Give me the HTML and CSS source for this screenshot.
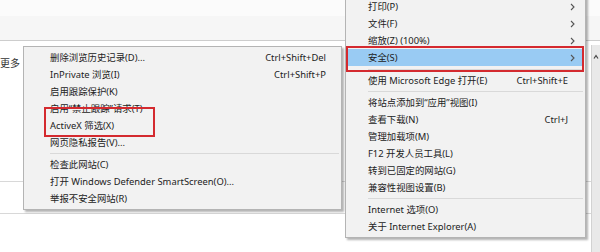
FILE: index.html
```html
<!DOCTYPE html>
<html>
<head>
<meta charset="utf-8">
<link rel="stylesheet" href="styles.css">
</head>
<body>
<div class="page">
  <div class="topbar"></div>
  <div class="toolbar"></div>
  <div class="content">
    <div class="main">
      <div class="more">更多</div>
      <div class="row row-a"></div>
      <div class="row row-b"></div>
    </div>
    <div class="scrollbar"><svg class="sb-arrow" width="6" height="6" viewBox="0 0 6 6"><path d="M1 4.5 L3 1.5 L5 4.5" fill="none" stroke="#444" stroke-width="1.2"/></svg></div>
  </div>

  <div class="menu menu-left">
    <div class="item"><span>删除浏览历史记录(D)...</span><span class="key">Ctrl+Shift+Del</span></div>
    <div class="item"><span>InPrivate 浏览(I)</span><span class="key">Ctrl+Shift+P</span></div>
    <div class="item"><span>启用跟踪保护(K)</span></div>
    <div class="item"><span>启用“禁止跟踪”请求(T)</span></div>
    <div class="item"><span>ActiveX 筛选(X)</span></div>
    <div class="item"><span>网页隐私报告(V)...</span></div>
    <div class="sep"></div>
    <div class="item"><span>检查此网站(C)</span></div>
    <div class="item"><span>打开 Windows Defender SmartScreen(O)...</span></div>
    <div class="item"><span>举报不安全网站(R)</span></div>
    <div class="mark mark-activex"></div>
  </div>

  <div class="menu menu-right">
    <div class="item"><span>打印(P)</span><svg class="arrow" width="5" height="8" viewBox="0 0 5 8"><path d="M1 1 L4 4 L1 7" fill="none" stroke="#555" stroke-width="1.1"/></svg></div>
    <div class="item"><span>文件(F)</span><svg class="arrow" width="5" height="8" viewBox="0 0 5 8"><path d="M1 1 L4 4 L1 7" fill="none" stroke="#555" stroke-width="1.1"/></svg></div>
    <div class="item"><span>缩放(Z) (100%)</span><svg class="arrow" width="5" height="8" viewBox="0 0 5 8"><path d="M1 1 L4 4 L1 7" fill="none" stroke="#555" stroke-width="1.1"/></svg></div>
    <div class="item active"><span>安全(S)</span><svg class="arrow" width="5" height="8" viewBox="0 0 5 8"><path d="M1 1 L4 4 L1 7" fill="none" stroke="#555" stroke-width="1.1"/></svg></div>
    <div class="sep sep-wide"></div>
    <div class="item"><span>使用 Microsoft Edge 打开(E)</span><span class="key">Ctrl+Shift+E</span></div>
    <div class="sep"></div>
    <div class="item"><span>将站点添加到“应用”视图(I)</span></div>
    <div class="item"><span>查看下载(N)</span><span class="key">Ctrl+J</span></div>
    <div class="item"><span>管理加载项(M)</span></div>
    <div class="item"><span>F12 开发人员工具(L)</span></div>
    <div class="item"><span>转到已固定的网站(G)</span></div>
    <div class="item"><span>兼容性视图设置(B)</span></div>
    <div class="sep"></div>
    <div class="item"><span>Internet 选项(O)</span></div>
    <div class="item"><span>关于 Internet Explorer(A)</span></div>
    <div class="mark mark-security"></div>
  </div>
</div>
</body>
</html>
```

FILE: styles.css
```css
* { box-sizing: border-box; }
html, body { margin: 0; padding: 0; }
body {
  width: 600px;
  height: 252px;
  overflow: hidden;
  background: #ffffff;
  font-family: "Noto Sans", "Noto Sans CJK SC", sans-serif;
  font-size: 9.4px;
  color: #222;
}
.page {
  position: relative;
  width: 600px;
  height: 252px;
  display: flex;
  flex-direction: column;
}
.topbar {
  height: 16px;
  background: #fbfbfb;
}
.toolbar {
  height: 25px;
  background: #f6f6f6;
  border-bottom: 1px solid #cdcdcd;
}
.content {
  flex: 1;
  display: flex;
}
.main {
  flex: 1;
  position: relative;
}
.more {
  margin: 15px 0 0 0;
  font-family: "Noto Sans CJK SC", sans-serif;
  font-size: 10px;
  line-height: 14px;
  color: #333;
}
.row {
  border-bottom: 1px solid #d8d8d8;
}
.row-a { height: 112px; }
.row-b { height: 32px; }
.scrollbar {
  width: 9px;
  margin: 4px 0 0 0;
  background: #e9e9e9;
  border-left: 1px solid #d2d2d2;
  display: flex;
  justify-content: center;
  padding-top: 9px;
}
.sb-arrow { display: block; }

.menu {
  position: absolute;
  background: #f2f2f2;
  border: 1px solid #b4b4b4;
  box-shadow: 2px 2px 2px rgba(0, 0, 0, 0.3);
  display: flex;
  flex-direction: column;
  padding: 2px 0 2px 0;
}
.menu-left {
  left: 23px;
  top: 46px;
  width: 319px;
}
.menu-right {
  left: 345px;
  top: -6px;
  width: 241px;
  padding-top: 3px;
}
.item {
  height: 17px;
  display: flex;
  align-items: center;
  justify-content: space-between;
  white-space: nowrap;
  line-height: 17px;
}
.menu-left .item {
  padding: 0 15px 0 26px;
}
.menu-right .item {
  margin: 0 1px;
  padding: 0 9px 0 21px;
}
.menu-right .item .key {
  margin-right: 7px;
}
.item.active {
  background: #99cbf3;
}
.arrow { display: block; }
.sep {
  height: 5px;
  display: flex;
  align-items: center;
  padding: 0 2px 0 22px;
}
.sep::before {
  content: "";
  flex: 1;
  height: 1px;
  background: #d9d9d9;
}
.sep.sep-wide { height: 6px; }
.menu-left .sep { padding-left: 26px; padding-right: 2px; }

.mark {
  position: absolute;
  border: 2px solid #d42a2f;
}
.mark-activex {
  left: 20px;
  top: 60px;
  width: 111px;
  height: 30px;
}
.mark-security {
  left: 0px;
  top: 51px;
  width: 238px;
  height: 26px;
}
```
